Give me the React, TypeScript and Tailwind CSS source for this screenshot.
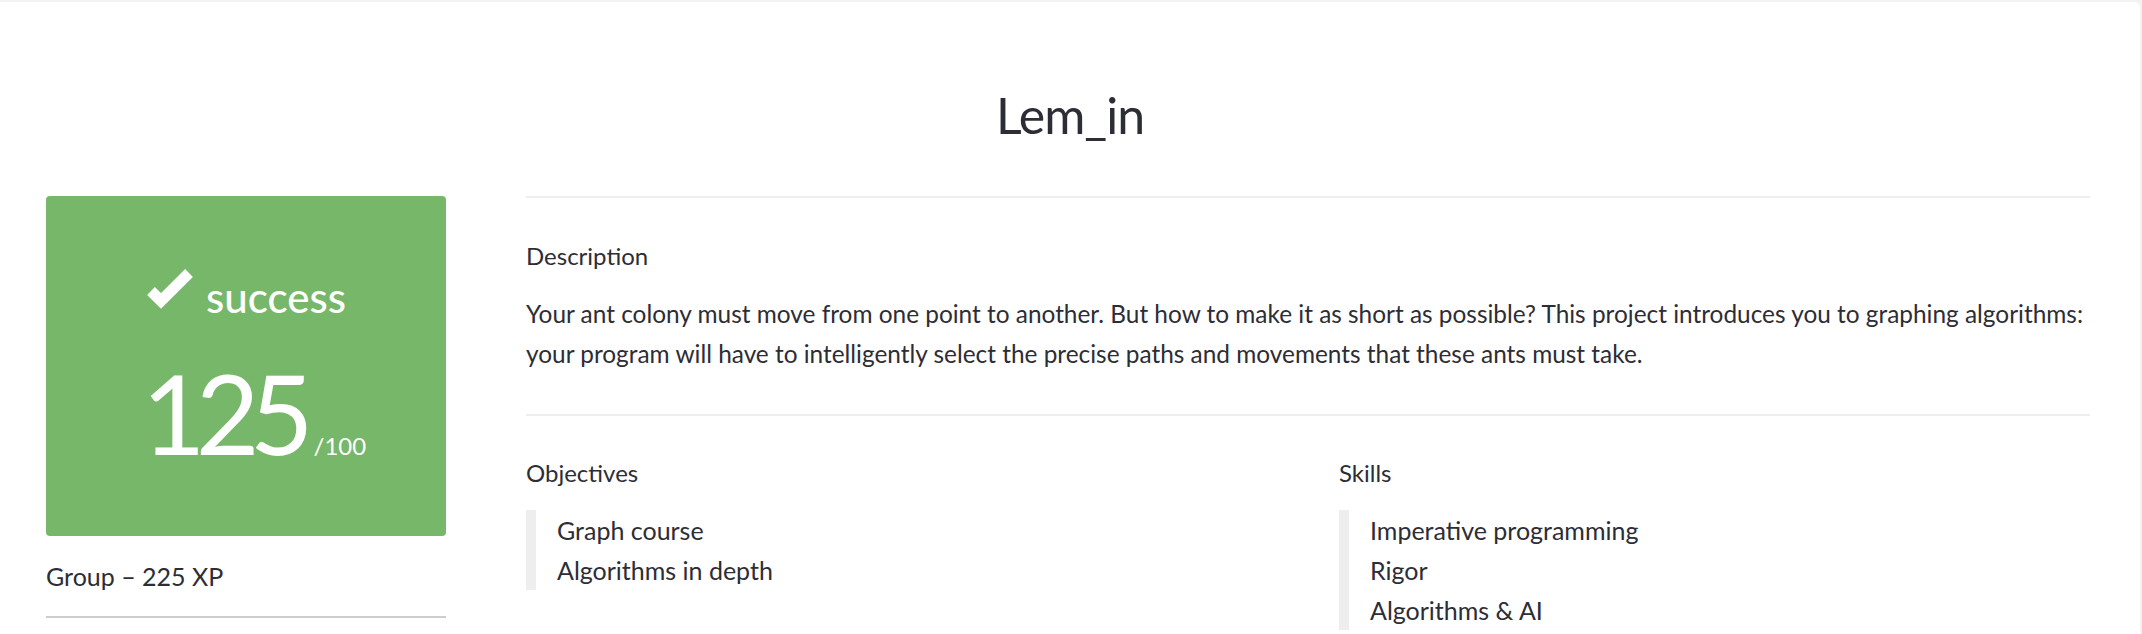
export default function App() {
  return (
    <div className="min-h-[634px] bg-[#f2f2f2] pt-[2px] pr-[2px] font-['Lato','Noto_Sans',sans-serif] text-[#2d2d36]">
      <div className="min-h-[632px] rounded-tr-[6px] bg-white">
        <h1 className="pt-[88px] text-center text-[50px] leading-[50px] font-normal tracking-[-1px]">Lem_in</h1>
        <div className="mt-[56px] flex gap-[80px] pl-[46px] pr-[50px]">
          <aside className="w-[400px] shrink-0">
            <div className="flex h-[340px] flex-col items-center rounded-[4px] bg-[#77b769] pt-[80px] text-white">
              <div className="flex h-[42px] items-start gap-[12px]">
                <svg width="48" height="40" viewBox="0 0 48 40" className="mt-[-8px] overflow-visible" aria-hidden="true">
                  <polyline points="5,23 15,33 43,5" fill="none" stroke="#ffffff" strokeWidth="11" strokeLinecap="butt" strokeLinejoin="miter" />
                </svg>
                <span className="text-[42px] leading-[42px] font-medium">success</span>
              </div>
              <div className="mt-[39px] flex items-baseline gap-[10px] pl-[16px]">
                <span className="text-[110px] leading-[110px] font-normal tracking-[-0.09em]">125</span>
                <span className="text-[24px] leading-[24px] font-normal">/100</span>
              </div>
            </div>
            <p className="mt-[20px] text-[25px] leading-[40px]">Group – 225 XP</p>
            <div className="mt-[20px] h-[2px] bg-[#cdcdcd]" />
          </aside>
          <main className="min-w-0 flex-1 border-t-2 border-[#eeeeee]">
            <h2 className="mt-[38px] text-[24px] leading-[40px] font-normal">Description</h2>
            <p className="mt-[18px] text-[24.4px] leading-[40px]">
              <span className="block whitespace-nowrap">
                Your ant colony must move from one point to another. But how to make it as short as possible? This project introduces you to graphing algorithms:
              </span>
              <span className="block whitespace-nowrap">
                your program will have to intelligently select the precise paths and movements that these ants must take.
              </span>
            </p>
            <div className="mt-[40px] h-[2px] bg-[#eeeeee]" />
            <div className="mt-[37px] grid grid-cols-2 gap-x-[62px]">
              <section>
                <h3 className="text-[24px] leading-[40px] font-normal">Objectives</h3>
                <ul className="mt-[17px] border-l-[10px] border-[#eeeeee] pl-[21px] text-[25px] leading-[40px]">
                  <li>Graph course</li>
                  <li>Algorithms in depth</li>
                </ul>
              </section>
              <section>
                <h3 className="text-[24px] leading-[40px] font-normal">Skills</h3>
                <ul className="mt-[17px] border-l-[10px] border-[#eeeeee] pl-[21px] text-[25px] leading-[40px]">
                  <li>Imperative programming</li>
                  <li>Rigor</li>
                  <li>Algorithms &amp; AI</li>
                </ul>
              </section>
            </div>
          </main>
        </div>
      </div>
    </div>
  );
}
